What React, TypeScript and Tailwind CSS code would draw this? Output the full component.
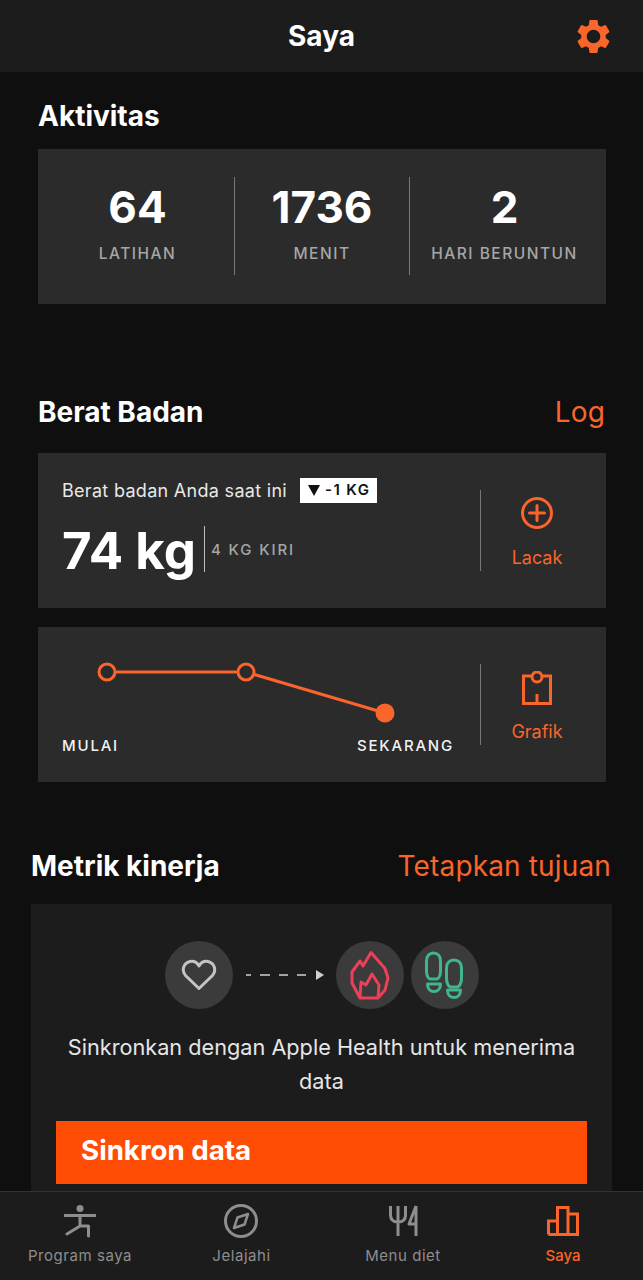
import React from 'react';

const ORANGE = '#f9652b';

const Stat = ({ value, label, cls, divider }: { value: string; label: string; cls: string; divider?: boolean }) => (
  <div className={`${cls} h-[98px] flex flex-col items-center ${divider ? 'border-r border-[#77777a]' : ''}`}>
    <div className="text-[44px] leading-[60px] font-bold text-white">{value}</div>
    <div className="mt-[7px] text-[15.5px] leading-[20px] font-medium text-[#a6a6a6] tracking-[1.5px]">{label}</div>
  </div>
);

const SectionHead = ({ title, action, cls }: { title: string; action?: string; cls: string }) => (
  <div className={`flex items-center justify-between ${cls}`}>
    <h2 className="text-[28px] leading-[36px] font-bold text-white">{title}</h2>
    {action && <span className="mr-[1px] text-[28px] leading-[36px] text-[#f9652b] tracking-[0.15px]">{action}</span>}
  </div>
);

const GearIcon = () => (
  <svg width="41" height="41" viewBox="0 0 24 24" fill={ORANGE}>
    <path d="M19.14 12.94c.04-.3.06-.61.06-.94s-.02-.64-.07-.94l2.03-1.58a.49.49 0 0 0 .12-.61l-1.92-3.32a.49.49 0 0 0-.59-.22l-2.39.96a7 7 0 0 0-1.62-.94l-.36-2.54a.48.48 0 0 0-.48-.41h-3.84a.48.48 0 0 0-.47.41l-.36 2.54c-.59.24-1.13.57-1.62.94l-2.39-.96a.48.48 0 0 0-.59.22L2.74 8.87a.48.48 0 0 0 .12.61l2.03 1.58c-.05.3-.09.63-.09.94s.02.64.07.94l-2.03 1.58a.49.49 0 0 0-.12.61l1.92 3.32c.12.22.37.29.59.22l2.39-.96c.5.38 1.03.7 1.62.94l.36 2.54c.05.24.24.41.48.41h3.84c.24 0 .44-.17.47-.41l.36-2.54a7 7 0 0 0 1.62-.94l2.39.96c.22.08.47 0 .59-.22l1.92-3.32a.48.48 0 0 0-.12-.61zM12 16A4 4 0 1 1 12 8a4 4 0 0 1 0 8z" />
  </svg>
);

const NavItem = ({ label, active, children }: { label: string; active?: boolean; children: React.ReactNode }) => (
  <div className="flex flex-col items-center">
    <div className="h-[36px] flex items-center justify-center">{children}</div>
    <span className={`mt-[7px] text-[15px] leading-[20px] ${active ? 'text-[#f9652b] font-medium' : 'text-[#8e8e8e] tracking-[0.55px]'}`}>{label}</span>
  </div>
);

export default function App() {
  return (
    <div className="w-[643px] h-[1280px] flex flex-col overflow-hidden bg-[#0f0f0f]" style={{ fontFamily: 'Inter, sans-serif' }}>
      {/* header */}
      <header className="h-[72px] shrink-0 bg-[#1c1c1c] flex items-center justify-between px-[29px]">
        <div className="w-[41px]" />
        <div className="text-[28px] font-bold text-white">Saya</div>
        <GearIcon />
      </header>

      <main className="flex-1 overflow-hidden">
        <div className="pl-[38px] pr-[37px]">
          <SectionHead title="Aktivitas" cls="pt-[11px] h-[77px]" />
          <div className="h-[155px] bg-[#2b2b2b] flex pt-[28px]">
            <Stat value="64" label="LATIHAN" cls="w-[197px] pl-[3px]" divider />
            <Stat value="1736" label="MENIT" cls="w-[175px]" divider />
            <Stat value="2" label="HARI BERUNTUN" cls="w-[189px]" />
          </div>

          <SectionHead title="Berat Badan" action="Log" cls="mt-[90px] h-[36px]" />

          <div className="mt-[23px] h-[155px] bg-[#2b2b2b] flex pl-[24px]">
            <div className="w-[418px] pt-[25px]">
              <div className="flex items-center h-[25px]">
                <span className="text-[18px] text-[#e8e8e8] tracking-[0.3px]">Berat badan Anda saat ini</span>
                <span className="ml-[13px] w-[77px] h-[25px] bg-white flex items-center pl-[8px] text-[15px] font-semibold text-[#111] tracking-[1.4px]">
                  <svg width="12" height="11" viewBox="0 0 12 11" className="mr-[5px]"><path d="M0 0h12L6 11z" fill="#111" /></svg>
                  -1 KG
                </span>
              </div>
              <div className="flex items-center mt-[22px]">
                <span className="text-[51px] leading-[50px] font-bold text-white translate-y-[1px]">74 kg</span>
                <div className="ml-[8px] w-px h-[46px] bg-[#bdbdbd] -translate-y-[1px]" />
                <span className="ml-[6px] text-[15px] font-medium text-[#a6a6a6] tracking-[1.9px]">4 KG KIRI</span>
              </div>
            </div>
            <div className="mt-[37px] h-[81px] w-[1px] bg-[#77777a]" />
            <div className="flex-1 flex flex-col items-center pt-[43px] pr-[13px]">
              <svg width="34" height="34" viewBox="0 0 34 34" fill="none" stroke={ORANGE} strokeWidth="3">
                <circle cx="17" cy="17" r="14.5" />
                <path d="M17 9.5v15M9.5 17h15" strokeLinecap="round" />
              </svg>
              <span className="mt-[16px] text-[18px] leading-[24px] text-[#f9652b]">Lacak</span>
            </div>
          </div>

          <div className="mt-[19px] h-[155px] bg-[#2b2b2b] flex pl-[24px]">
            <div className="w-[418px] pt-[30px]">
              <svg width="418" height="70" viewBox="0 0 418 70" className="block" fill="none">
                <path d="M45 15H184L323 56" stroke={ORANGE} strokeWidth="3" />
                <circle cx="45" cy="15" r="8" fill="#2b2b2b" stroke={ORANGE} strokeWidth="3" />
                <circle cx="184" cy="15" r="8" fill="#2b2b2b" stroke={ORANGE} strokeWidth="3" />
                <circle cx="323" cy="56" r="9.5" fill={ORANGE} />
              </svg>
              <div className="flex justify-between pr-[26px] mt-[9px] text-[15px] leading-[20px] font-medium text-[#f2f2f2] tracking-[1.8px]">
                <span>MULAI</span>
                <span>SEKARANG</span>
              </div>
            </div>
            <div className="mt-[37px] h-[81px] w-[1px] bg-[#77777a]" />
            <div className="flex-1 flex flex-col items-center pt-[44px] pr-[13px]">
              <svg width="30" height="34" viewBox="0 0 30 34" fill="none" stroke={ORANGE} strokeWidth="3">
                <path d="M9.5 5H1.5V32.5H28.5V5H20.5" />
                <circle cx="15" cy="6" r="5" />
                <path d="M15 23v9" />
              </svg>
              <span className="mt-[15px] text-[18px] leading-[24px] text-[#f9652b]">Grafik</span>
            </div>
          </div>
        </div>

        <div className="px-[31px]">
          <SectionHead title="Metrik kinerja" action="Tetapkan tujuan" cls="mt-[66px] h-[36px]" />
          <div className="mt-[20px] bg-[#1c1c1c] h-[400px] pt-[36px] px-[25px]">
            <div className="flex items-center justify-center h-[69px]">
              <div className="w-[68px] h-[68px] rounded-full bg-[#3b3b3b] flex items-center justify-center">
                <svg width="36" height="32" viewBox="0 0 36 32" fill="none" stroke="#c4c4c4" strokeWidth="3" strokeLinejoin="round">
                  <path d="M18 29.5 4.5 16.5C.5 12 2 4 9 2.5c4-.8 7 1 9 4.5 2-3.500 5-5.300 9-4.500 7 1.500 8.500 9.500 4.500 14z" />
                </svg>
              </div>
              <svg width="78" height="12" viewBox="0 0 78 12" className="ml-[13px] mr-[12px]">
                <path d="M0 6h5M14 6h10M33 6h9M51 6h9" stroke="#cfcfcf" strokeWidth="1.5" />
                <path d="M70 1l8 5-8 5z" fill="#cfcfcf" />
              </svg>
              <div className="w-[68px] h-[68px] rounded-full bg-[#3b3b3b]">
                <svg width="68" height="68" viewBox="0 0 68 68" fill="none" stroke="#ee3f58" strokeWidth="3" strokeLinejoin="round">
                  <path d="M24 57 16 42V31L24 20l3 5 8-13.500L49 27.500 52 37 49 49 42 57z" />
                  <path d="M24 57 25 41l5 3 6-11 7 11-1 13" />
                </svg>
              </div>
              <div className="ml-[7px] w-[68px] h-[68px] rounded-full bg-[#3b3b3b]">
                <svg width="68" height="68" viewBox="0 0 68 68" fill="none" stroke="#3fb68b" strokeWidth="3" strokeLinejoin="round">
                  <path d="M15.500 20c0-5 3-8 7-8s7 3 7 8v10c0 5-2 8-4 8h-6c-2 0-4-3-4-8z" />
                  <path d="M16.500 43h13c0 5-3 7.500-6.500 7.500s-6.500-2.500-6.500-7.500z" />
                  <path d="M35.500 27c0-5 3-8 7.500-8s7.500 3 7.500 8v10c0 5-2 9-4.500 9h-6c-2.500 0-4.500-4-4.500-9z" />
                  <path d="M36.500 49h13c0 5-3 7.500-6.500 7.500s-6.500-2.500-6.500-7.500z" />
                </svg>
              </div>
            </div>
            <p className="mt-[21px] text-center text-[21.7px] leading-[34px] text-[#e6e6e6]">
              Sinkronkan dengan Apple Health untuk menerima data
            </p>
            <div className="mt-[23px] h-[63px] bg-[#ff4d05] flex items-center pl-[25px] pb-[3px] text-[27.7px] font-bold text-white">
              Sinkron data
            </div>
          </div>
        </div>
      </main>

      {/* bottom nav */}
      <nav className="h-[89px] shrink-0 bg-[#1c1c1c] border-t border-[#333] flex pt-[11px]">
        <div className="w-[160px] flex justify-center">
          <NavItem label="Program saya">
            <svg width="32" height="34" viewBox="0 0 32 34" fill="none" stroke="#8e8e8e" strokeWidth="3">
              <circle cx="16" cy="4.500" r="3.500" fill="#8e8e8e" stroke="none" />
              <path d="M1 11.500H31M16 11.500V22M24.500 32V22H16L3 30" strokeLinejoin="round" strokeLinecap="round" />
            </svg>
          </NavItem>
        </div>
        <div className="w-[163px] flex justify-center">
          <NavItem label="Jelajahi">
            <svg width="34" height="34" viewBox="0 0 34 34" fill="none" stroke="#8e8e8e" strokeWidth="3">
              <circle cx="17" cy="17" r="15.500" />
              <path d="M24 10 20.500 20.500 10 24 13.500 13.500z" strokeLinejoin="round" strokeWidth="2.500" />
            </svg>
          </NavItem>
        </div>
        <div className="w-[160px] flex justify-center">
          <NavItem label="Menu diet">
            <svg width="30" height="34" viewBox="0 0 30 34" fill="none" stroke="#8e8e8e" strokeWidth="3">
              <path d="M2.500 2v9c0 5 3 7 7.500 7s7.500-2 7.500-7V2M10 2v30" />
              <path d="M28 2V32M28 2 21 20H28" strokeLinejoin="round" />
            </svg>
          </NavItem>
        </div>
        <div className="flex-1 flex justify-center">
          <NavItem label="Saya" active>
            <svg width="32" height="30" viewBox="0 0 32 30" fill="none" stroke={ORANGE} strokeWidth="3">
              <path d="M1.500 28.500V15H10.500V28.500M10.500 28.500V1.500H21V28.500M21 8H30.500V28.500H1.500" />
            </svg>
          </NavItem>
        </div>
      </nav>
    </div>
  );
}
